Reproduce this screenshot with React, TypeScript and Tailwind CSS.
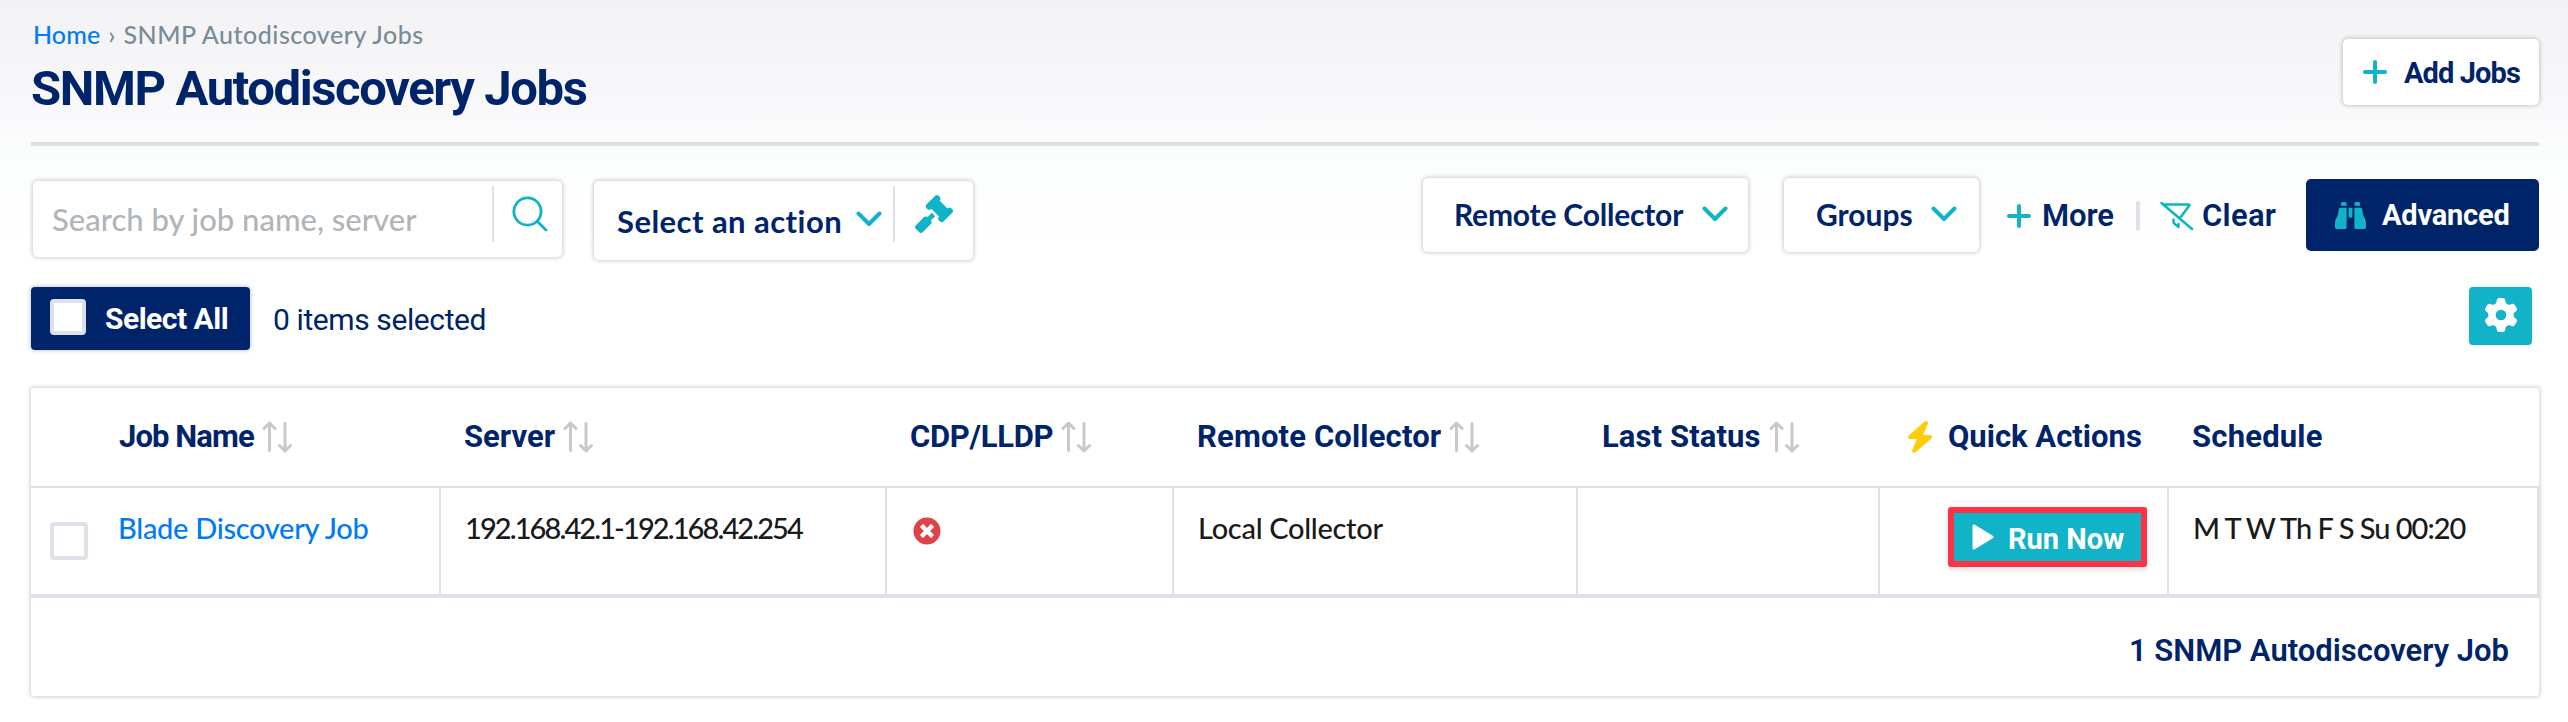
import type { ReactNode } from "react";
import { FaBinoculars, FaBolt, FaGavel, FaGear } from "react-icons/fa6";
import { FaTimesCircle } from "react-icons/fa";

const head = "font-['Roboto',sans-serif] font-bold text-[#002469] whitespace-nowrap";
const body = "font-['Lato',sans-serif] whitespace-nowrap";
const box = "flex bg-white rounded-[5px] shadow-[0_0_4px_1px_rgba(0,0,0,0.2)]";

function Plus() {
  return (
    <svg viewBox="0 0 24 24" className="size-6 shrink-0 text-[#10b3c7]" fill="none" stroke="currentColor" strokeWidth="4" strokeLinecap="round">
      <path d="M12 2v20M2 12h20" />
    </svg>
  );
}

function Chevron() {
  return (
    <svg viewBox="0 0 26 16" className="w-[26px] h-4 shrink-0 text-[#10b3c7]" fill="none" stroke="currentColor" strokeWidth="4" strokeLinecap="round" strokeLinejoin="round">
      <path d="M2.5 2.5 13 13 23.5 2.5" />
    </svg>
  );
}

function SortArrows() {
  return (
    <svg viewBox="0 0 30 32" className="w-[30px] h-8 shrink-0 text-[#c9c9c9]" fill="none" stroke="currentColor" strokeWidth="3" strokeLinecap="round" strokeLinejoin="round">
      <path d="M7.5 29.5V2.5M2 7.5l5.5-5.5L13 7.5M23 2.5v27M17.500 24.500l5.500 5.500 5.500-5.500" />
    </svg>
  );
}

function Search() {
  return (
    <svg viewBox="0 0 36 36" className="size-9 shrink-0 text-[#10b3c7]" fill="none" stroke="currentColor" strokeWidth="2.800" strokeLinecap="round">
      <circle cx="15.500" cy="15.500" r="13.600" />
      <path d="M25.200 25.200 34 34" />
    </svg>
  );
}

function ClearFilter() {
  return (
    <svg viewBox="0 0 34 30" className="w-[34px] h-[30px] shrink-0 text-[#10b3c7]" fill="none" stroke="currentColor" strokeWidth="2.500" strokeLinecap="round" strokeLinejoin="round">
      <path d="M1.500 2 32 28M5 3.500h23.500q1.500 0 .5 1.500L20 17M13.500 18.500v2.500q0 1 1 1.800l4 3.200v-3" />
    </svg>
  );
}

function Play() {
  return (
    <svg viewBox="0 0 22 26" className="w-[22px] h-[26px] shrink-0" fill="#fff" stroke="#fff" strokeWidth="3" strokeLinejoin="round">
      <path d="M2 2v22L20 13z" />
    </svg>
  );
}

function Heading({ children, className = "" }: { children: ReactNode; className?: string }) {
  return <div className={`${head} flex items-center text-[31px] leading-10 ${className}`}>{children}</div>;
}

function Cell({ children, className = "" }: { children?: ReactNode; className?: string }) {
  return <div className={`${body} h-[106px] border-r-2 border-[#dee1e7] pl-6 text-[29px] font-medium leading-[79px] text-[#1a1a1a] ${className}`}>{children}</div>;
}

const columns = "grid grid-cols-[410px_446px_287px_404px_302px_289px_370px]";

export default function App() {
  return (
    <div className="h-[722px] w-[2568px] overflow-hidden bg-[linear-gradient(#f2f2f4_0px,#f8f8fa_100px,#fcfdfd_160px,#ffffff_250px)] pl-[31px] pr-[29px]">
      <header className="flex h-[146px] justify-between border-b-4 border-[#dce0e4]">
        <div className="pt-[13px]">
          <nav className={`${body} flex h-[44px] items-center pl-[2px] text-[25px] font-medium text-[#7a8c96]`}>
            <a className="tracking-[0.1px] text-[#007bf5]">Home</a>
            <span className="px-2">›</span>
            <span className="tracking-[0.5px]">SNMP Autodiscovery Jobs</span>
          </nav>
          <h1 className={`${head} mt-[2px] text-[49px] leading-[60px] tracking-[-1.4px]`}>SNMP Autodiscovery Jobs</h1>
        </div>
        <button className={`${box} ${head} mt-[39px] h-[66px] w-[196px] items-center gap-[17px] pl-5 text-[29px] tracking-[-0.9px]`}>
          <Plus /><span className="mt-[3px]">Add Jobs</span>
        </button>
      </header>

      <section className="flex h-[141px] items-start">
        <div className={`${box} ml-[2px] mt-[35px] h-[76px] w-[529px]`}>
          <div className={`${body} w-[459px] pl-[19px] text-[31px] font-medium leading-[77px] text-[#b0b5b9]`}>Search by job name, server</div>
          <div className="mt-[5px] h-14 w-[2px] bg-[#dee1e7]" />
          <div className="ml-[18px] mt-[15px]"><Search /></div>
        </div>
        <div className={`${box} ml-8 mt-[35px] h-[79px] w-[379px]`}>
          <div className={`${body} w-[262px] pl-[23px] text-[31px] font-bold leading-[81px] tracking-[0.45px] text-[#002469]`}>Select an action</div>
          <div className="mt-[30px]"><Chevron /></div>
          <div className="ml-[11px] mt-[5px] h-14 w-[2px] bg-[#dee1e7]" />
          <FaGavel className="ml-5 mt-[14px] size-[38px] text-[#10b3c7]" />
        </div>
        <div className={`${box} ${body} ml-[450px] mt-8 h-[74px] w-[325px] pl-[31px] text-[30px] font-bold leading-[72px] text-[#002469]`}>
          <span className="w-[248px] tracking-[-0.2px]">Remote Collector</span>
          <span className="mt-[28px]"><Chevron /></span>
        </div>
        <div className={`${box} ${body} ml-9 mt-8 h-[74px] w-[195px] pl-8 text-[30px] font-bold leading-[72px] text-[#002469]`}>
          <span className="w-[115px]">Groups</span>
          <span className="mt-[28px]"><Chevron /></span>
        </div>
        <div className={`${head} ml-7 mt-[34px] flex h-[72px] w-[299px] items-center text-[31px] font-semibold`}>
          <Plus />
          <span className="ml-[11px] w-[94px] tracking-[-0.1px]">More</span>
          <span className="h-[30px] w-[4px] rounded-full bg-[#dee1e7]" />
          <span className="ml-5"><ClearFilter /></span>
          <span className="ml-[8px] tracking-[0.3px]">Clear</span>
        </div>
        <button className={`${head} mt-[33px] flex h-[72px] w-[233px] items-center rounded-[5px] bg-[#002469] pl-[29px] text-[29px] tracking-[-0.2px] text-white`}>
          <FaBinoculars className="size-[31px] text-[#10b3c7]" />
          <span className="ml-4 mt-[2px] text-white">Advanced</span>
        </button>
      </section>

      <section className="flex h-[101px] items-start">
        <button className={`${head} flex h-[63px] w-[219px] items-center rounded-[4px] bg-[#002469] pl-[19px] text-[30px] tracking-[-0.5px] shadow-[0_0_4px_1px_rgba(0,0,0,0.2)]`}>
          <span className="mb-[3px] size-9 rounded-[4px] border-4 border-[#dee1e7] bg-white" />
          <span className="ml-[19px] text-white">Select All</span>
        </button>
        <span className="ml-[23px] whitespace-nowrap font-['Roboto',sans-serif] text-[30px] leading-[65px] tracking-[-0.4px] text-[#002469]">0 items selected</span>
        <button className="ml-auto mr-[7px] flex h-[58px] w-[63px] items-center justify-center rounded-[4px] bg-[#10b3c7]">
          <FaGear className="mb-[2px] size-[34px] text-white" />
        </button>
      </section>

      <section className="h-[308px] rounded-[3px] bg-white shadow-[0_0_4px_1px_rgba(0,0,0,0.2)]">
        <div className={`${columns} h-[100px] items-center border-b-2 border-[#dee1e7]`}>
          <Heading className="gap-2 pl-[88px]"><span className="tracking-[-0.900px]">Job Name</span><SortArrows /></Heading>
          <Heading className="gap-2 pl-[23px]"><span>Server</span><SortArrows /></Heading>
          <Heading className="gap-2 pl-[23px]"><span className="tracking-[-0.300px]">CDP/LLDP</span><SortArrows /></Heading>
          <Heading className="gap-2 pl-[23px]"><span className="tracking-[0.150px]">Remote Collector</span><SortArrows /></Heading>
          <Heading className="gap-2 pl-6"><span className="tracking-[0.100px]">Last Status</span><SortArrows /></Heading>
          <Heading className="pl-[24px]"><FaBolt className="mr-[12px] size-[32px] text-[#ffcc0a]" />Quick Actions</Heading>
          <Heading className="pl-[23px] tracking-[0.2px]">Schedule</Heading>
        </div>
        <div className={`${columns} border-b-4 border-[#dee1e7]`}>
          <Cell className="flex !pl-[19px]">
            <span className="mt-[34px] size-[38px] rounded-[4px] border-4 border-[#dee1e7]" />
            <a className="ml-[30px] tracking-[-0.3px] text-[#007bf5]">Blade Discovery Job</a>
          </Cell>
          <Cell className="tracking-[-1.9px]">192.168.42.1-192.168.42.254</Cell>
          <Cell><FaTimesCircle className="ml-[2px] mt-[29px] size-7 text-[#e04347]" /></Cell>
          <Cell className="tracking-[-0.3px]">Local Collector</Cell>
          <Cell />
          <Cell className="!pl-[68px]">
            <button className={`${head} mt-[19px] flex h-[60px] w-[199px] items-center rounded-[3px] border-[6px] border-[#fb3344] bg-[#10b3c7] pl-[18px] text-[29px] leading-none shadow-[0_2px_6px_rgba(0,0,0,0.15)]`}>
              <Play /><span className="ml-[14px] mt-[4px] text-white">Run Now</span>
            </button>
          </Cell>
          <Cell className="tracking-[-1px]">M T W Th F S Su 00:20</Cell>
        </div>
        <div className={`${head} pr-[30px] text-right text-[31px] font-semibold leading-[106px]`}>1 SNMP Autodiscovery Job</div>
      </section>
    </div>
  );
}
